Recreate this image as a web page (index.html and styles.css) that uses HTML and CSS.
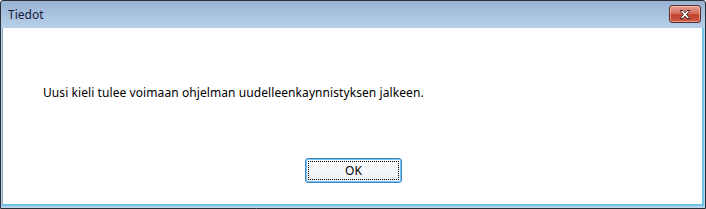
FILE: index.html
```html
<!DOCTYPE html>
<html>
<head>
<meta charset="utf-8">
<link rel="stylesheet" href="styles.css">
</head>
<body>
<div class="window">
  <div class="titlebar">
    <span class="title">Tiedot</span>
    <button class="close" aria-label="Sulje">
      <svg width="18" height="11" viewBox="0 0 18 11">
        <path d="M4 1.5 L7 1.5 L9 3.8 L11 1.5 L14 1.5 L10.6 5.5 L14 9.5 L11 9.5 L9 7.2 L7 9.5 L4 9.5 L7.4 5.5 Z" fill="#ffffff" stroke="#4a2a2a" stroke-width="1" stroke-linejoin="round"/>
      </svg>
    </button>
  </div>
  <div class="client">
    <p class="message">Uusi kieli tulee voimaan ohjelman uudelleenkaynnistyksen jalkeen.</p>
    <div class="buttons">
      <button class="ok"><span class="focus">OK</span></button>
    </div>
  </div>
</div>
</body>
</html>
```

FILE: styles.css
```css
html, body {
  margin: 0;
  padding: 0;
  background: #ffffff;
}
.window {
  box-sizing: border-box;
  width: 706px;
  height: 209px;
  border: 1px solid #2a3038;
  border-radius: 3px 3px 0 0;
  background: linear-gradient(#98b3d3, #b9d1ea 28px);
  display: flex;
  flex-direction: column;
  padding: 0 1px 2px 1px;
  font-family: "Noto Sans", "DejaVu Sans", sans-serif;
}
.titlebar {
  height: 27px;
  display: flex;
  align-items: flex-start;
  justify-content: space-between;
}
.title {
  margin: 5px 0 0 6px;
  font-size: 12px;
  color: #1a1a3a;
}
.close {
  margin: 4px 3px 0 0;
  width: 32px;
  height: 18px;
  padding: 0;
  border: 1px solid #5a2a2a;
  border-radius: 3px;
  background: linear-gradient(#e8a295 0%, #d4705e 45%, #c2412c 55%, #cb5a44 100%);
  box-shadow: inset 0 0 0 1px rgba(255,220,210,0.5);
  display: flex;
  align-items: center;
  justify-content: center;
}
.client {
  flex: 1;
  background: #ffffff;
  border-left: 1px solid #8fa9c6;
  border-right: 2px solid #6cc6e8;
  border-bottom: 2px solid #6cc6e8;
  display: flex;
  flex-direction: column;
}
.message {
  margin: 56px 0 0 40px;
  font-size: 12px;
  letter-spacing: 0.08px;
  color: #000000;
  font-family: "Noto Sans", "DejaVu Sans", sans-serif;
}
.buttons {
  display: flex;
  justify-content: center;
  margin-top: 57px;
  padding-left: 2px;
}
.ok {
  width: 97px;
  height: 25px;
  padding: 2px;
  border: 1px solid #3a85c4;
  border-radius: 3px;
  background: linear-gradient(#fbfcfd, #eef2f6);
  box-shadow: inset 0 0 0 1px #7cc4f0;
  font-family: "Noto Sans", "DejaVu Sans", sans-serif;
  font-size: 12px;
  color: #000;
  display: flex;
}
.focus {
  flex: 1;
  border: 1px dotted #000;
  display: flex;
  align-items: center;
  justify-content: center;
}
```
